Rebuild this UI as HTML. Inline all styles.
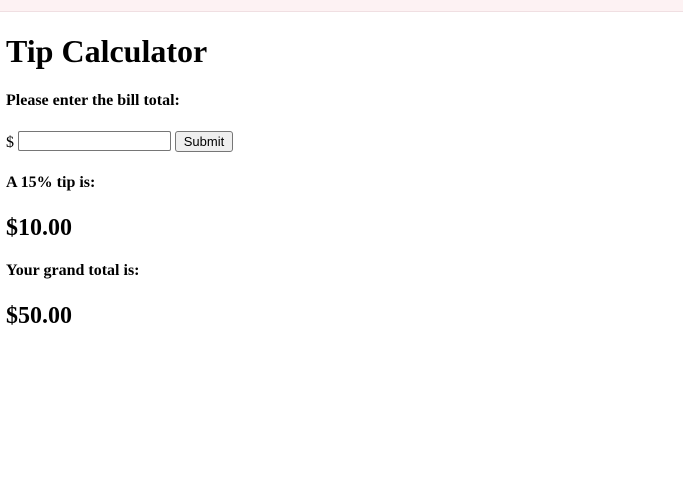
<!DOCTYPE html>
<html><head><style>
html,body{margin:0;padding:0;width:683px;height:499px;background:#fff;overflow:hidden;font-family:"Liberation Serif",serif;color:#000}
.bar{position:absolute;left:0;top:0;width:683px;height:11px;background:#fdf2f3;border-bottom:1px solid #f0dfe2}
.t{position:absolute;left:6px;margin:0;font-weight:bold;white-space:nowrap}
.s{font-size:16px;line-height:16px}
.h1{font-size:32px;line-height:32px}
.h2{font-size:24px;line-height:24px}
input{position:absolute;left:18px;top:131px;width:153px;height:20px;box-sizing:border-box;border:1px solid #767676;border-radius:2px;padding:0;margin:0}
button{position:absolute;left:175px;top:131px;width:58px;height:21px;box-sizing:border-box;border:1px solid #767676;border-radius:3px;background:#efefef;font-family:"Liberation Sans",sans-serif;font-size:13px;padding:0;margin:0;color:#000}
</style></head><body>
<div class="bar"></div>
<div class="t h1" style="top:35px">Tip Calculator</div>
<div class="t s" style="top:93px">Please enter the bill total:</div>
<div class="t s" style="top:135px;font-weight:normal">$</div>
<input type="text"><button>Submit</button>
<div class="t s" style="top:175px">A 15% tip is:</div>
<div class="t h2" style="top:216px">$10.00</div>
<div class="t s" style="top:263px">Your grand total is:</div>
<div class="t h2" style="top:304px">$50.00</div>
</body></html>
